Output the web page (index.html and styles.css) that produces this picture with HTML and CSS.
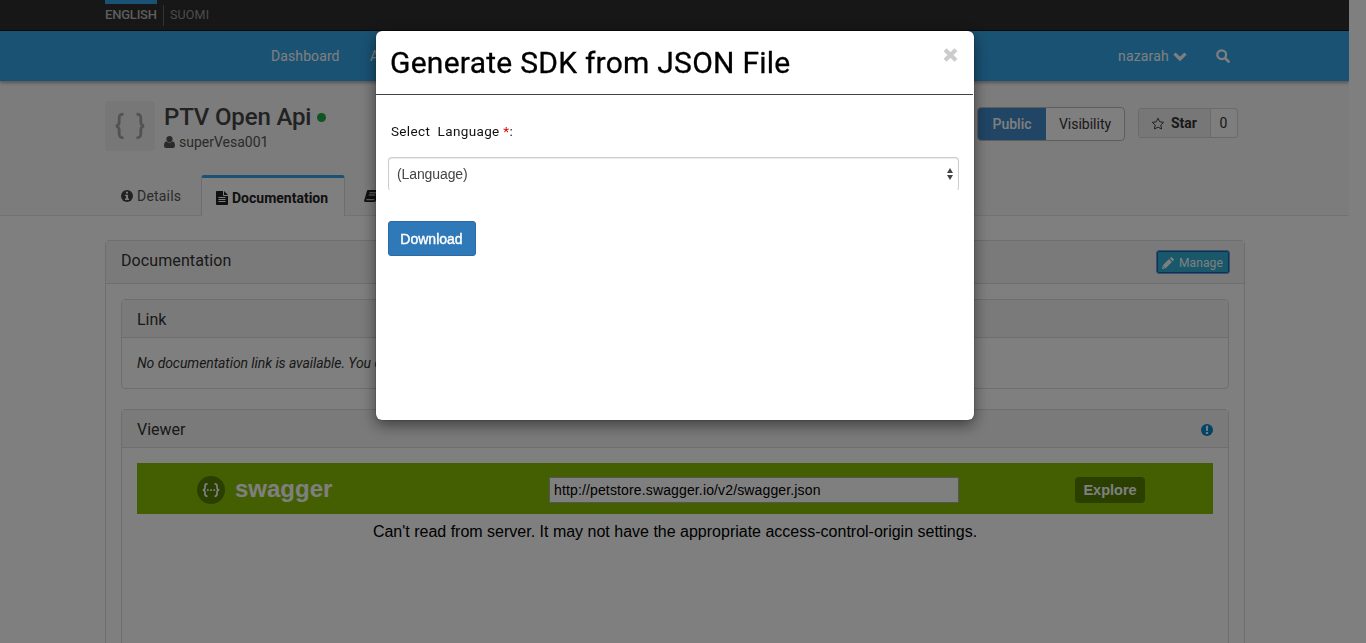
FILE: index.html
```html
<!DOCTYPE html>
<html lang="en">
<head>
<meta charset="utf-8">
<title>PTV Open Api</title>
<link rel="stylesheet" href="styles.css">
</head>
<body>
<div class="page">
  <div class="topbar"><span class="lang active">ENGLISH</span><span class="lang other">SUOMI</span></div>
  <nav class="navbar">
    <a class="nav-dashboard">Dashboard</a><a class="nav-apis">A</a>
    <a class="nav-user">nazarah <svg class="chevron" width="14" height="9" viewBox="0 0 14 9"><path d="M1.5 1.6 7 7l5.5-5.4" fill="none" stroke="#fff" stroke-width="3.2"/></svg></a>
    <svg class="search" width="14" height="14" viewBox="0 0 14 14"><circle cx="5.7" cy="5.7" r="4.4" fill="none" stroke="#fff" stroke-width="2.2"/><path d="m9 9 3.6 3.6" stroke="#fff" stroke-width="2.6" stroke-linecap="round"/></svg>
  </nav>
  <header class="api-header">
    <div class="api-top">
      <div class="api-logo"><svg width="50" height="50" viewBox="0 0 50 50" fill="none" stroke="#a5a5a5" stroke-width="2.8"><path d="M18.5 13.2c-4 0-4.3 1.4-4.3 4v3.5c0 2.5-.6 3.8-3.2 4.3 2.6.5 3.2 1.8 3.2 4.3v3.5c0 2.6.3 4 4.3 4"/><path d="M31.5 13.2c4 0 4.3 1.4 4.3 4v3.5c0 2.5.6 3.8 3.2 4.3-2.6.5-3.2 1.8-3.2 4.3v3.5c0 2.6-.3 4-4.3 4"/></svg></div>
      <div class="api-title">
        <h1>PTV Open Api<i class="dot"></i></h1>
        <div class="owner"><svg width="11" height="12" viewBox="0 0 11 12" fill="#555"><circle cx="5.5" cy="3.1" r="3.1"/><path d="M2.4 5.3C.8 5.7 0 7.2 0 9.5 0 11.2.8 12 2.2 12h6.6c1.4 0 2.2-.8 2.2-2.5 0-2.3-.8-3.8-2.4-4.2-1.8 1.8-4.4 1.8-6.2 0z"/></svg><span>superVesa001</span></div>
      </div>
      <div class="visibility"><b>Public</b><span>Visibility</span></div>
      <div class="stars"><b><svg width="14" height="13" viewBox="0 0 14 13"><path d="m7 1.2 1.7 3.6 4 .5-2.9 2.7.8 4L7 10.1 3.4 12l.8-4-2.9-2.7 4-.5z" fill="none" stroke="#444" stroke-width="1"/></svg>Star</b><span>0</span></div>
    </div>
    <div class="tabs">
      <span class="tab details"><svg width="12" height="12" viewBox="0 0 12 12"><circle cx="6" cy="6" r="6" fill="#444"/><path d="M5 1.8h2v1.8H5zM4 4.7h3v3.7h1V10H4V8.4h1V6.1H4z" fill="#f8f8f8"/></svg>Details</span>
      <span class="tab current"><svg width="12" height="14" viewBox="0 0 12 14"><path d="M0 .8Q0 0 .8 0H7v4.2q0 .8.8.8H12v8.2q0 .8-.8.8H.8Q0 14 0 13.2zM8 0l4 4H8z" fill="#222"/><path d="M2.5 6.5h7M2.5 8.5h7M2.5 10.5h7" stroke="#fff"/></svg>Documentation</span>
      <svg class="book" width="15" height="12" viewBox="0 0 15 12"><path d="M4 0h10q1 0 .7 1L12 10.5Q11.6 12 10 12H1.5Q-.3 12 .3 10L3 1Q3.3 0 4 0z" fill="#222"/><path d="M5.5 2.8h6.5M4.8 5h6.5M2.4 9.7h8" stroke="#fff" stroke-width=".9"/></svg>
    </div>
  </header>
  <main class="panel outer">
    <div class="panel-head"><span>Documentation</span><button class="manage"><svg width="12" height="12" viewBox="0 0 12 12"><path d="M0 12l.7-3.6L7 2.1 9.9 5 3.6 11.3zM7.8 1.3 8.7.4q.7-.7 1.4 0l1.5 1.5q.7.7 0 1.4l-.9.9z" fill="#fff"/><path d="M1.2 9.3l1.5 1.5" stroke="#31b0d5" stroke-width=".8"/></svg>Manage</button></div>
    <div class="outer-body">
      <section class="panel link"><div class="panel-head">Link</div><p>No documentation link is available. You can</p></section>
      <section class="panel viewer">
        <div class="panel-head"><span>Viewer</span><svg width="12" height="12" viewBox="0 0 12 12"><circle cx="6" cy="6" r="6" fill="#0088cc"/><path d="M4.8 1.8h2.4L6.9 7H5.1zM4.9 8h2.2v2H4.9z" fill="#f5f5f5"/></svg></div>
        <div class="viewer-body">
          <div class="swagger">
            <svg class="swagger-logo" width="28" height="28" viewBox="0 0 28 28"><circle cx="14" cy="14" r="14" fill="#547f00"/><g fill="none" stroke="#fff" stroke-width="1.7"><path d="M10.5 7.8C8.3 7.8 8 8.6 8 10v1.8c0 1.4-.5 2-2.2 2.2 1.7.2 2.2.8 2.2 2.2V18c0 1.5.3 2.3 2.5 2.3"/><path d="M17.5 7.8c2.2 0 2.5.8 2.5 2.2v1.8c0 1.4.5 2 2.2 2.2-1.7.2-2.2.8-2.2 2.2V18c0 1.5-.3 2.3-2.5 2.3"/></g><path d="M10 13.2h1.7v1.7H10zM13.2 13.2h1.7v1.7h-1.7zM16.4 13.2h1.7v1.7h-1.7z" fill="#fff"/></svg>
            <b class="swagger-name">swagger</b><div class="url">http://petstore.swagger.io/v2/swagger.json</div><b class="explore">Explore</b>
          </div>
          <div class="message">Can't read from server. It may not have the appropriate access-control-origin settings.</div>
        </div>
      </section>
    </div>
  </main>
</div>
<div class="backdrop">
  <div class="modal">
    <div class="modal-head"><h2>Generate SDK from JSON File</h2><svg class="close" width="15" height="14" viewBox="0 0 15 14"><path d="m2 1.7 11 10.6M13 1.7 2 12.3" stroke="#ccc" stroke-width="4.2"/></svg></div>
    <div class="modal-body">
      <div class="label">Select&nbsp; Language <i>*</i>:</div>
      <div class="select"><span>(Language)</span><svg width="6" height="12" viewBox="0 0 6 12" fill="#444"><path d="M3 0l3 5H0zM3 12l3-5H0z"/></svg></div>
      <button class="download">Download</button>
    </div>
  </div>
</div>
</body>
</html>
```
FILE: styles.css
```css
* { box-sizing: border-box; }
body { margin: 0; height: 643px; overflow: hidden; background: #fff; font: 14px/20px Roboto, sans-serif; color: #333; }
svg { display: block; flex: none; }
h1, h2, p { margin: 0; }
button { font-family: inherit; }

.page { width: 1349px; height: 643px; overflow: hidden; }
.topbar { height: 31px; background: #2e2e2e; border-bottom: 1px solid #181818; padding-left: 105px; display: flex; align-items: flex-start; font-size: 12.5px; letter-spacing: .15px; color: #999; }
.lang { height: 26px; }
.lang.active { width: 52px; border-top: 4px solid #34a4ec; line-height: 21px; font-weight: 500; font-size: 13px; letter-spacing: -.2px; color: #bbb; white-space: nowrap; }
.lang.other { margin: 5px 0 0 6px; padding-left: 6px; height: 21px; border-left: 1px solid #666; line-height: 20px; }
.navbar { height: 50px; background: #34a4e7; color: #fff; display: flex; align-items: center; padding-left: 271px; box-shadow: 0 2px 3px rgba(0, 0, 0, .3); position: relative; }
.navbar a { white-space: nowrap; }
.nav-dashboard { width: 99px; letter-spacing: .1px; }
.nav-apis { width: 748px; }
.nav-user { width: 98px; display: flex; align-items: center; gap: 4px; letter-spacing: .15px; }

.api-header { height: 135px; background: #f8f8f8; border-bottom: 1px solid #e5e5e5; padding: 20px 0 0 105px; }
.api-top { height: 74px; display: flex; align-items: flex-start; }
.api-logo { width: 50px; height: 50px; border-radius: 4px; background: #eee; }
.api-title { width: 822px; padding-left: 9px; }
.api-title h1 { display: flex; align-items: center; font-size: 24px; height: 31px; line-height: 33px; padding-top: 1px; font-weight: 500; color: #444; letter-spacing: -.15px; }
.dot { width: 9px; height: 9px; border-radius: 50%; background: #1fa845; margin: 1px 0 0 6px; }
.owner { display: flex; align-items: center; gap: 4px; color: #555; line-height: 20px; }
.visibility { display: flex; width: 148px; height: 34px; margin-top: 6px; border: 1px solid #bbb; border-radius: 4px; overflow: hidden; line-height: 32px; text-align: center; background: #fff; }
.visibility b { width: 68px; font-weight: 500; background: #428bca; color: #fff; }
.visibility span { flex: 1; }
.stars { display: flex; width: 100px; height: 30px; margin: 7px 0 0 13px; border: 1px solid #d5d5d5; border-radius: 3px; line-height: 29px; background: #fcfcfc; }
.stars b { display: flex; align-items: center; gap: 6px; width: 72px; padding-left: 12px; font-weight: 700; background: #eee; border-right: 1px solid #d5d5d5; }
.stars span { flex: 1; text-align: center; padding-right: 1px; }
.tabs { display: flex; height: 41px; padding-left: 16px; }
.tab { display: flex; align-items: center; }
.details { width: 80px; gap: 4px; color: #555; letter-spacing: .2px; }
.current { width: 144px; height: 41px; gap: 4px; padding: 2px 0 0 14px; background: #fff; border: 1px solid #ddd; border-top: 3px solid #34a4e7; border-bottom: 0; border-radius: 3px 3px 0 0; font-weight: 700; color: #222; }
.book { margin: 15px 0 0 19px; }

.panel { border: 1px solid #ddd; border-radius: 4px; background: #fff; }
.panel-head { display: flex; align-items: center; justify-content: space-between; padding: 2px 15px 0; height: 38px; font-size: 16px; background: #f5f5f5; border-bottom: 1px solid #ddd; }
.outer { width: 1140px; height: 440px; margin: 24px 0 0 105px; }
.outer > .panel-head { height: 43px; padding: 0 14px; font-size: 16px; }
.outer > .panel-head > span { padding: 0 0 3px 1px; letter-spacing: .1px; }
.manage { display: flex; align-items: center; gap: 5px; width: 74px; height: 24px; margin-top: 0; padding: 1px 5px 0; background: #31b0d5; border: 1px solid #6f9fe0; box-shadow: inset 0 0 0 1px #2062a8; border-radius: 3px; color: #fff; font-size: 12px; letter-spacing: .1px; }
.outer-body { padding: 15px; }
.link { height: 90px; }
.link p { padding: 15px; font-style: italic; white-space: nowrap; letter-spacing: -.08px; }
.viewer { height: 300px; margin-top: 20px; }
.viewer .panel-head { padding-top: 3px; }
.viewer-body { padding: 15px; font-family: "Liberation Sans", Arial, sans-serif; }
.swagger { display: flex; align-items: center; height: 51px; padding: 2px 0 0 60px; background: #89bf04; color: #fff; }
.swagger-name { width: 314px; padding: 0 0 1px 10px; font-size: 24px; line-height: 30px; }
.url { width: 410px; height: 26px; margin-left: 10px; padding-left: 4px; border: 1px solid #aaa; background: #fff; color: #000; font-size: 14px; line-height: 25px; letter-spacing: .14px; }
.explore { width: 70px; height: 26px; margin-left: 116px; border-radius: 4px; background: #547f00; text-align: center; font-size: 14.5px; line-height: 26px; }
.message { padding-top: 8px; text-align: center; font-size: 16px; color: #000; }

/* Dimmed layer over the page */
.backdrop { position: fixed; inset: 0; background: rgba(0, 0, 0, .5); }
.modal { width: 598px; height: 389px; margin: 31px 0 0 376px; background: #fff; border-radius: 6px; box-shadow: 0 5px 15px rgba(0, 0, 0, .5), 0 0 1px #000; color: #000; }
.modal-head { display: flex; justify-content: space-between; align-items: flex-start; width: 597px; height: 64px; padding: 14px 15px 0 14px; border-bottom: 1px solid #444; }
.modal-head h2 { font-size: 30px; line-height: 36px; font-weight: 400; letter-spacing: .25px; white-space: nowrap; -webkit-text-stroke: .3px #000; }
.close { margin-top: 3px; }
.modal-body { padding: 26px 15px 0 12px; }
.label { padding: 0 0 0 3px; height: 20px; font-size: 13.5px; letter-spacing: .35px; color: #111; }
.label i { color: #d00; font-style: normal; }
.select { display: flex; align-items: center; justify-content: space-between; height: 34px; margin-top: 16px; padding: 0 5px 0 8px; border: 1px solid #ccc; border-bottom-color: transparent; border-radius: 4px; box-shadow: inset 0 1px 1px rgba(0, 0, 0, .08); color: #444; font: 14px/20px "Liberation Sans", Arial, sans-serif; letter-spacing: -.1px; }
.download { display: block; width: 88px; height: 35px; margin-top: 30px; padding: 0 1px 0 0; border: 1px solid #2b6ba8; border-radius: 3px; background: #2f79b9; color: #fff; font: 14px/20px "Liberation Sans", Arial, sans-serif; -webkit-text-stroke: .4px #fff; }
```
